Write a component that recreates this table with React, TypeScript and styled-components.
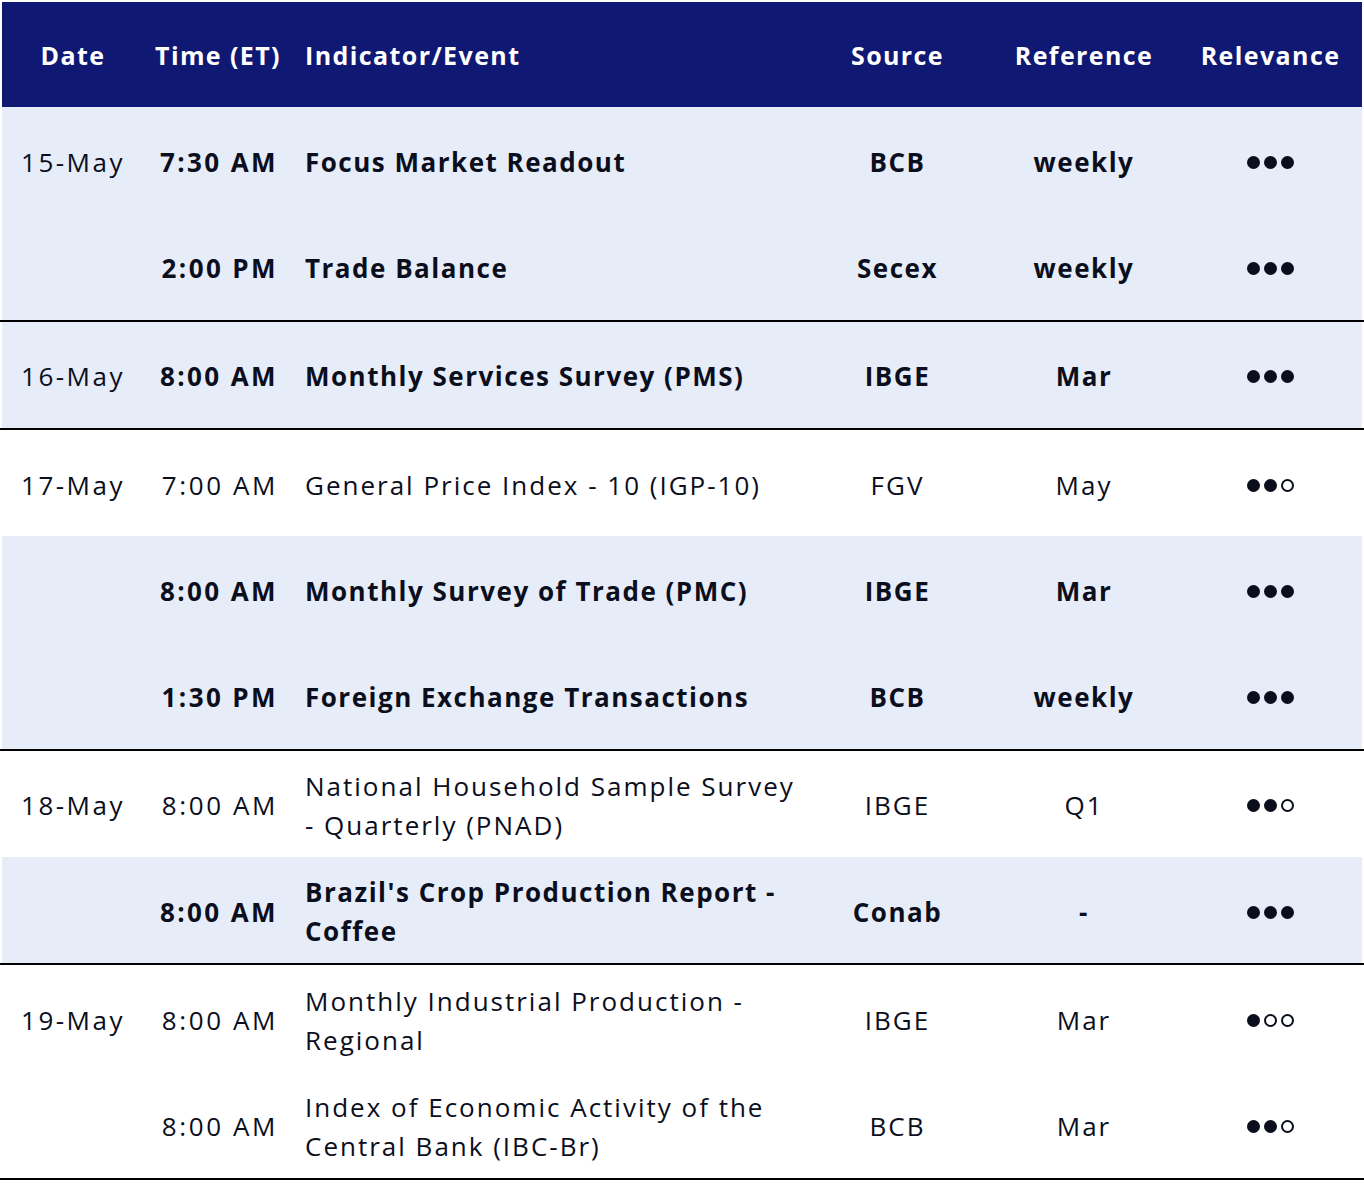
import React from "react";
import styled, { createGlobalStyle } from "styled-components";

type Level = 1 | 2 | 3;

interface EventRow {
  date?: string;
  time: string;
  event: string[];
  source: string;
  reference: string;
  relevance: Level;
  bold?: boolean;
}

interface EventGroup {
  shaded: boolean;
  rows: EventRow[];
}

const groups: EventGroup[] = [
  {
    shaded: true,
    rows: [
      { date: "15-May", time: "7:30 AM", event: ["Focus Market Readout"], source: "BCB", reference: "weekly", relevance: 3, bold: true },
      { time: "2:00 PM", event: ["Trade Balance"], source: "Secex", reference: "weekly", relevance: 3, bold: true },
    ],
  },
  {
    shaded: true,
    rows: [
      { date: "16-May", time: "8:00 AM", event: ["Monthly Services Survey (PMS)"], source: "IBGE", reference: "Mar", relevance: 3, bold: true },
    ],
  },
  {
    shaded: false,
    rows: [
      { date: "17-May", time: "7:00 AM", event: ["General Price Index - 10 (IGP-10)"], source: "FGV", reference: "May", relevance: 2 },
      { time: "8:00 AM", event: ["Monthly Survey of Trade (PMC)"], source: "IBGE", reference: "Mar", relevance: 3, bold: true },
      { time: "1:30 PM", event: ["Foreign Exchange Transactions"], source: "BCB", reference: "weekly", relevance: 3, bold: true },
    ],
  },
  {
    shaded: false,
    rows: [
      { date: "18-May", time: "8:00 AM", event: ["National Household Sample Survey", "- Quarterly (PNAD)"], source: "IBGE", reference: "Q1", relevance: 2 },
      { time: "8:00 AM", event: ["Brazil's Crop Production Report -", "Coffee"], source: "Conab", reference: "-", relevance: 3, bold: true },
    ],
  },
  {
    shaded: false,
    rows: [
      { date: "19-May", time: "8:00 AM", event: ["Monthly Industrial Production -", "Regional"], source: "IBGE", reference: "Mar", relevance: 1 },
      { time: "8:00 AM", event: ["Index of Economic Activity of the", "Central Bank (IBC-Br)"], source: "BCB", reference: "Mar", relevance: 2 },
    ],
  },
];

const GlobalStyle = createGlobalStyle`
  body {
    margin: 0;
    background: #fff;
    font-family: "Open Sans", "Liberation Sans", sans-serif;
    color: #0b0e1c;
  }
`;

const COLUMNS = "142px 148px 518px 175px 198px 175px";

const Page = styled.div`
  padding: 2px 2px 0;
  width: 1360px;
`;

const HeaderRow = styled.div`
  display: grid;
  grid-template-columns: ${COLUMNS};
  height: 105px;
  align-items: center;
  background: #0f1873;
  color: #fff;
  font-size: 25px;
  font-weight: 700;
  letter-spacing: 1.4px;
`;

const HeadCell = styled.div<{ $align?: "left" | "center" }>`
  text-align: ${(p) => p.$align || "center"};
  padding-left: ${(p) => (p.$align === "left" ? "13px" : "0")};
  white-space: nowrap;
`;

const Group = styled.div`
  margin: 0 -2px;
  padding: 0 2px;
  border-bottom: 2px solid #000;
`;

const Row = styled.div<{ $shaded: boolean; $bold?: boolean }>`
  display: grid;
  grid-template-columns: ${COLUMNS};
  box-sizing: border-box;
  height: 106.3px;
  padding-top: 4px;
  align-items: center;
  background: ${(p) => (p.$shaded ? "#e6ecf8" : "#fff")};
  font-size: 26px;
  line-height: 39px;
  letter-spacing: ${(p) => (p.$bold ? "1.5px" : "2px")};
  font-weight: ${(p) => (p.$bold ? 700 : 400)};
`;

const DateCell = styled.div`
  text-align: center;
  font-weight: 400;
  letter-spacing: 2.5px;
`;

const TimeCell = styled.div<{ $bold?: boolean }>`
  text-align: right;
  padding-right: 14px;
  white-space: nowrap;
  letter-spacing: ${(p) => (p.$bold ? "2.4px" : "2.6px")};
`;

const EventCell = styled.div`
  padding-left: 13px;
  white-space: nowrap;
`;

const CenterCell = styled.div`
  text-align: center;
`;

const Dots = styled.div`
  display: flex;
  justify-content: center;
  gap: 4px;
`;

const Dot = styled.span<{ $filled: boolean }>`
  width: 13px;
  height: 13px;
  box-sizing: border-box;
  border-radius: 50%;
  border: 2px solid #0b0e1c;
  background: ${(p) => (p.$filled ? "#0b0e1c" : "transparent")};
`;

const Relevance = ({ level }: { level: Level }) => (
  <Dots>
    {[1, 2, 3].map((i) => (
      <Dot key={i} $filled={i <= level} />
    ))}
  </Dots>
);

export default function App() {
  return (
    <Page>
      <GlobalStyle />
      <HeaderRow>
        <HeadCell>Date</HeadCell>
        <HeadCell>Time (ET)</HeadCell>
        <HeadCell $align="left">Indicator/Event</HeadCell>
        <HeadCell>Source</HeadCell>
        <HeadCell>Reference</HeadCell>
        <HeadCell>Relevance</HeadCell>
      </HeaderRow>
      {groups.map((group, gi) => (
        <Group key={gi}>
          {group.rows.map((row, ri) => (
            <Row key={ri} $shaded={group.shaded || !!row.bold} $bold={row.bold}>
              <DateCell>{row.date}</DateCell>
              <TimeCell $bold={row.bold}>{row.time}</TimeCell>
              <EventCell>
                {row.event.map((line, li) => (
                  <div key={li}>{line}</div>
                ))}
              </EventCell>
              <CenterCell>{row.source}</CenterCell>
              <CenterCell>{row.reference}</CenterCell>
              <Relevance level={row.relevance} />
            </Row>
          ))}
        </Group>
      ))}
    </Page>
  );
}
